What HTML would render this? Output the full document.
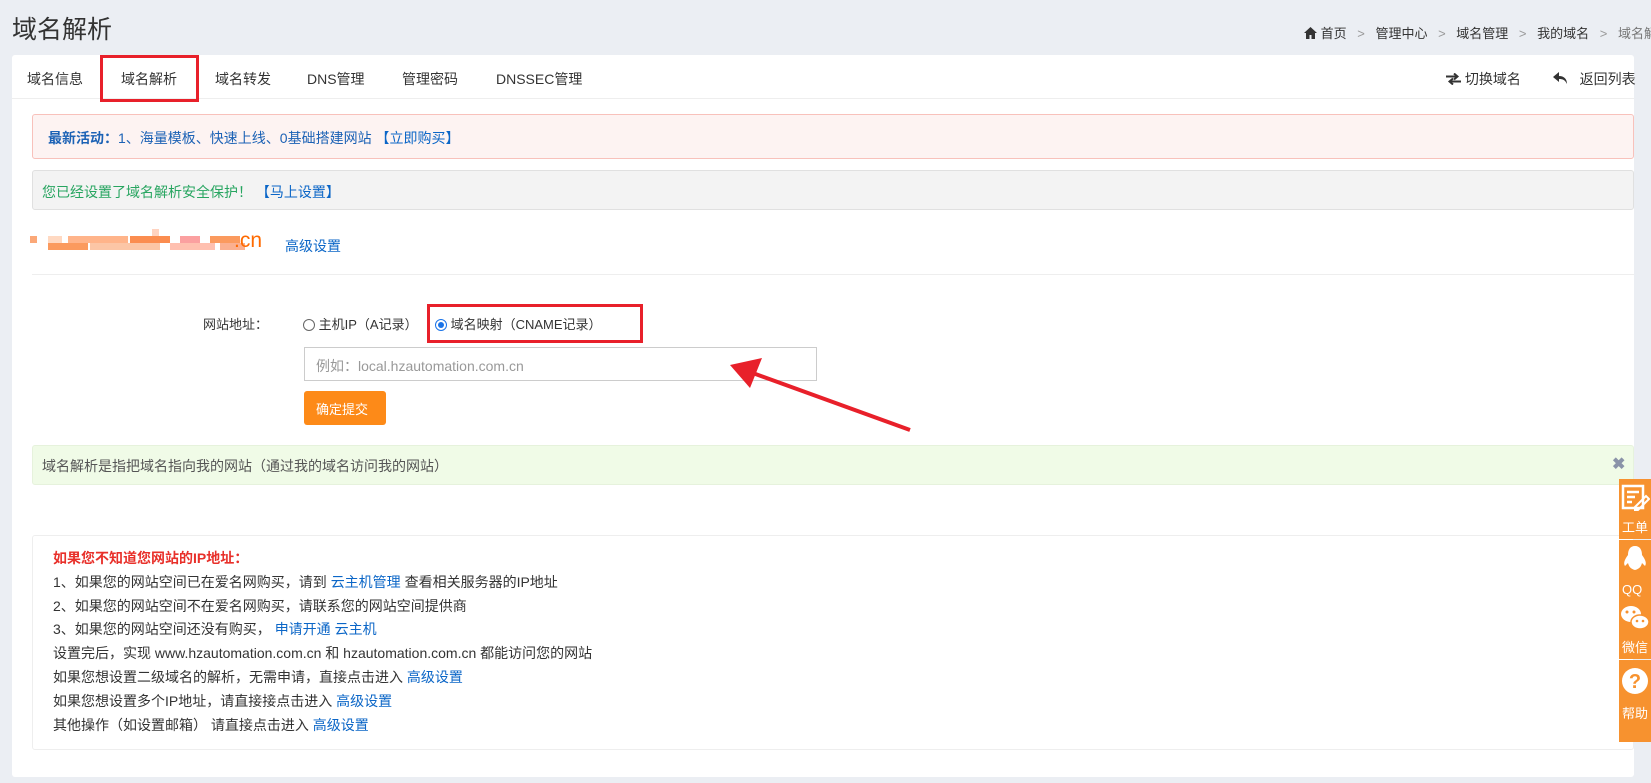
<!DOCTYPE html>
<html><head><meta charset="utf-8">
<style>
*{margin:0;padding:0;box-sizing:border-box}
body{width:1651px;height:783px;background:#ebeef3;font-family:"Liberation Sans","Noto Sans CJK SC",sans-serif;color:#333;position:relative;overflow:hidden;font-size:14px}
.a{position:absolute;white-space:nowrap}
a{color:#0b66c7;text-decoration:none}
.panel{position:absolute;left:12px;top:55px;width:1622px;height:722px;background:#fff;border-radius:3px}
.tab{position:absolute;top:69px;font-size:14px;color:#333}
.box{position:absolute;border-radius:3px}
.red{position:absolute;border:3px solid #e8202a}
.fb{position:absolute;left:1619px;width:32px;height:60px;background:#f7922f;color:#fff;font-size:13px;text-align:center}
.fb span{position:absolute;bottom:3px;left:3px}
.px{position:absolute;width:7px;height:7px}
</style></head><body>
<div class="a" style="left:12px;top:10px;font-size:25px;color:#333">域名解析</div>
<div class="a" style="left:1304px;top:23px;font-size:13px;color:#333">
<svg width="13" height="12" viewBox="0 0 13 12" style="vertical-align:-1px"><path d="M6.5 0L0 6h2v6h3.5V8h2v4H11V6h2z" fill="#333"/></svg> 首页 <span style="color:#999;margin:0 7px">&gt;</span> 管理中心 <span style="color:#999;margin:0 7px">&gt;</span> 域名管理 <span style="color:#999;margin:0 7px">&gt;</span> 我的域名 <span style="color:#999;margin:0 7px">&gt;</span> <span style="color:#777">域名解析</span></div>

<div class="panel"></div>
<div class="a" style="left:12px;top:98px;width:1622px;height:1px;background:#eee"></div>
<div class="tab" style="left:27px">域名信息</div>
<div class="tab" style="left:121px">域名解析</div>
<div class="tab" style="left:215px">域名转发</div>
<div class="tab" style="left:307px">DNS管理</div>
<div class="tab" style="left:402px">管理密码</div>
<div class="tab" style="left:496px">DNSSEC管理</div>
<div class="red" style="left:100px;top:55px;width:99px;height:47px"></div>
<div class="tab" style="left:1446px"><svg width="15" height="12" viewBox="0 0 15 12" style="vertical-align:-1px"><path d="M0 3.5h11M8 0.5l3.5 3-3.5 3M15 8.5H4M7 5.5l-3.5 3 3.5 3" stroke="#333" stroke-width="2" fill="none"/></svg> 切换域名</div>
<div class="tab" style="left:1553px"><svg width="15" height="13" viewBox="0 0 15 13" style="vertical-align:-1px"><path d="M6 0L0 5l6 5V7c4 0 6 1 8 5 0-5-3-8-8-8z" fill="#333"/></svg>&nbsp;&nbsp; 返回列表</div>

<div class="box" style="left:32px;top:114px;width:1602px;height:45px;background:#fdf3f2;border:1px solid #f8c1bb"></div>
<div class="a" style="left:48px;top:128px;font-size:14px;color:#1c62b5"><b>最新活动：</b>1、海量模板、快速上线、0基础搭建网站 <a>【立即购买】</a></div>
<div class="box" style="left:32px;top:170px;width:1602px;height:40px;background:#f3f3f3;border:1px solid #e0e0e0"></div>
<div class="a" style="left:42px;top:182px;font-size:14px;color:#27a560">您已经设置了域名解析安全保护！ <a>【马上设置】</a></div>

<div style="position:absolute;left:30px;top:229px">
<div class="px" style="left:0;top:7px;background:#fba878"></div>
<div class="px" style="left:18px;top:7px;background:#ffd9c2;width:14px"></div>
<div class="px" style="left:18px;top:14px;background:#fb9a5e;width:40px"></div>
<div class="px" style="left:38px;top:7px;background:#ffb48a;width:60px"></div>
<div class="px" style="left:60px;top:14px;background:#fcc6a6;width:70px"></div>
<div class="px" style="left:100px;top:7px;background:#fb8d50;width:40px"></div>
<div class="px" style="left:122px;top:0;background:#ffd3c0;width:7px"></div>
<div class="px" style="left:140px;top:14px;background:#ffc0b0;width:45px"></div>
<div class="px" style="left:150px;top:7px;background:#fba0a0;width:20px"></div>
<div class="px" style="left:180px;top:7px;background:#fb9a5e;width:30px"></div>
<div class="px" style="left:190px;top:14px;background:#fbb090;width:25px"></div>
</div>
<div class="a" style="left:234px;top:229px;font-size:21px;color:#ff6a00">.cn</div>
<a class="a" style="left:285px;top:236px;font-size:14px">高级设置</a>
<div class="a" style="left:32px;top:274px;width:1602px;height:1px;background:#eee"></div>

<div class="a" style="left:203px;top:314px;font-size:13px">网站地址：</div>
<div class="a" style="left:303px;top:314px;font-size:13px"><span style="display:inline-block;width:12px;height:12px;border:1px solid #666;border-radius:50%;vertical-align:-2px"></span> 主机IP（A记录）</div>
<div class="a" style="left:435px;top:314px;font-size:13px"><span style="display:inline-block;width:12px;height:12px;border:1px solid #1a73e8;border-radius:50%;vertical-align:-2px;position:relative"><span style="position:absolute;left:2px;top:2px;width:6px;height:6px;border-radius:50%;background:#1a73e8"></span></span> 域名映射（CNAME记录）</div>
<div class="red" style="left:427px;top:304px;width:216px;height:39px"></div>
<div class="box" style="left:304px;top:347px;width:513px;height:34px;border:1px solid #ccc;border-radius:0"></div>
<div class="a" style="left:316px;top:356px;font-size:14px;color:#999">例如：local.hzautomation.com.cn</div>
<div class="box" style="left:304px;top:391px;width:82px;height:34px;background:#fd8a18"></div>
<div class="a" style="left:316px;top:399px;font-size:13px;color:#fff">确定提交</div>
<svg class="a" style="left:700px;top:350px" width="240" height="100"><line x1="210" y1="80" x2="50" y2="22" stroke="#e8202a" stroke-width="4"/><path d="M30 15L62 8 50 38z" fill="#e8202a"/></svg>

<div class="box" style="left:32px;top:445px;width:1602px;height:40px;background:#f0fbe7;border:1px solid #e6f2dc"></div>
<div class="a" style="left:42px;top:456px;font-size:14px;color:#555">域名解析是指把域名指向我的网站（通过我的域名访问我的网站）</div>
<div class="a" style="left:1612px;top:454px;font-size:16px;color:#8a93a8;font-weight:bold">✖</div>

<div class="box" style="left:32px;top:535px;width:1602px;height:215px;border:1px solid #eee"></div>
<div style="position:absolute;left:53px;top:547px;font-size:14px;line-height:23.8px;color:#333">
<div style="color:#e8302a;font-weight:bold">如果您不知道您网站的IP地址：</div>
<div>1、如果您的网站空间已在爱名网购买，请到 <a>云主机管理</a> 查看相关服务器的IP地址</div>
<div>2、如果您的网站空间不在爱名网购买，请联系您的网站空间提供商</div>
<div>3、如果您的网站空间还没有购买， <a>申请开通</a> <a>云主机</a></div>
<div>设置完后，实现 www.hzautomation.com.cn 和 hzautomation.com.cn 都能访问您的网站</div>
<div>如果您想设置二级域名的解析，无需申请，直接点击进入 <a>高级设置</a></div>
<div>如果您想设置多个IP地址，请直接接点击进入 <a>高级设置</a></div>
<div>其他操作（如设置邮箱） 请直接点击进入 <a>高级设置</a></div>
</div>

<div class="fb" style="top:479px"><svg width="30" height="30" viewBox="0 0 30 30" style="margin-top:4px"><rect x="3" y="3" width="20" height="22" fill="none" stroke="#fff" stroke-width="2.5"/><path d="M7 9h12M7 14h8M7 19h5" stroke="#fff" stroke-width="2.5"/><path d="M15 24l11-11 3 3-11 11h-3z" fill="none" stroke="#fff" stroke-width="2"/></svg><span>工单</span></div>
<div class="fb" style="top:540px"><svg width="30" height="30" viewBox="0 0 30 30" style="margin-top:4px"><path d="M15 2c-5 0-7 4-7 9-3 4-5 8-3 11 1-1 2-2 3-3 1 4 3 6 7 7 4-1 6-3 7-7 1 1 2 2 3 3 2-3 0-7-3-11 0-5-2-9-7-9z" fill="#fff"/></svg><span>QQ</span></div>
<div class="fb" style="top:599px"><svg width="32" height="30" viewBox="0 0 32 30" style="margin-top:4px"><ellipse cx="12" cy="11" rx="10" ry="8" fill="#fff"/><ellipse cx="21" cy="19" rx="9" ry="7" fill="#fff" stroke="#f7922f" stroke-width="1.5"/><circle cx="8" cy="9" r="1.5" fill="#f7922f"/><circle cx="15" cy="9" r="1.5" fill="#f7922f"/><circle cx="18" cy="18" r="1.3" fill="#f7922f"/><circle cx="24" cy="18" r="1.3" fill="#f7922f"/></svg><span>微信</span></div>
<div class="fb" style="top:660px;height:82px"><svg width="30" height="30" viewBox="0 0 30 30" style="margin-top:6px"><circle cx="15" cy="15" r="13" fill="#fff"/><text x="15" y="22" text-anchor="middle" font-size="20" font-weight="bold" fill="#f7922f" font-family="Liberation Sans">?</text></svg><span style="bottom:20px">帮助</span></div>
</body></html>
